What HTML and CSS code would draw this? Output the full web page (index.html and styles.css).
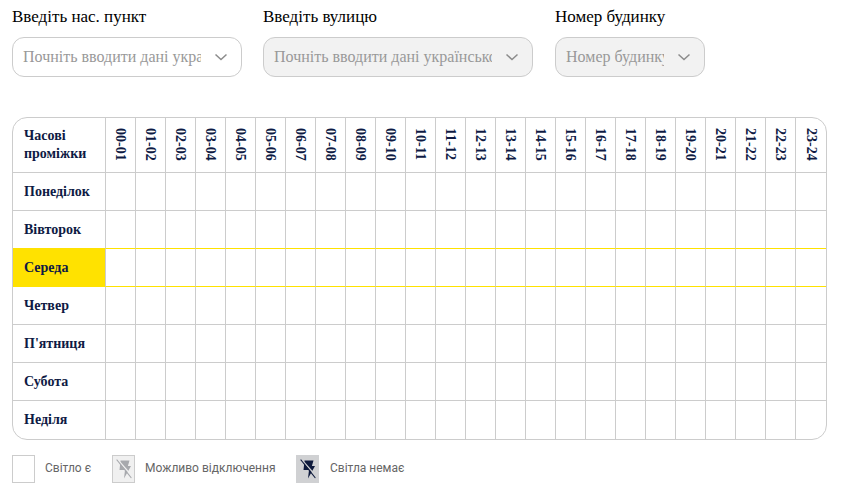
FILE: index.html
```html
<!DOCTYPE html>
<html lang="uk">
<head>
<meta charset="utf-8">
<title>Графік</title>
<link rel="stylesheet" href="styles.css">
</head>
<body>
<form class="filters">
  <div class="field field-city">
    <label class="field-label">Введіть нас. пункт</label>
    <div class="select">
      <input class="select-input" placeholder="Почніть вводити дані українською">
      <svg class="chevron" viewBox="0 0 14 8"><path d="M1.5 1.5 7 6.5 12.5 1.5"/></svg>
    </div>
  </div>
  <div class="field field-street">
    <label class="field-label">Введіть вулицю</label>
    <div class="select is-disabled">
      <input class="select-input" placeholder="Почніть вводити дані українською" disabled>
      <svg class="chevron" viewBox="0 0 14 8"><path d="M1.5 1.5 7 6.5 12.5 1.5"/></svg>
    </div>
  </div>
  <div class="field field-house">
    <label class="field-label">Номер будинку</label>
    <div class="select is-disabled">
      <input class="select-input" placeholder="Номер будинку" disabled>
      <svg class="chevron" viewBox="0 0 14 8"><path d="M1.5 1.5 7 6.5 12.5 1.5"/></svg>
    </div>
  </div>
</form>

<div class="schedule">
  <table class="grid">
    <thead>
      <tr>
        <th class="head-title">Часові<br>проміжки</th>
        <th><span class="hour">00-01</span></th><th><span class="hour">01-02</span></th><th><span class="hour">02-03</span></th><th><span class="hour">03-04</span></th><th><span class="hour">04-05</span></th><th><span class="hour">05-06</span></th><th><span class="hour">06-07</span></th><th><span class="hour">07-08</span></th><th><span class="hour">08-09</span></th><th><span class="hour">09-10</span></th><th><span class="hour">10-11</span></th><th><span class="hour">11-12</span></th><th><span class="hour">12-13</span></th><th><span class="hour">13-14</span></th><th><span class="hour">14-15</span></th><th><span class="hour">15-16</span></th><th><span class="hour">16-17</span></th><th><span class="hour">17-18</span></th><th><span class="hour">18-19</span></th><th><span class="hour">19-20</span></th><th><span class="hour">20-21</span></th><th><span class="hour">21-22</span></th><th><span class="hour">22-23</span></th><th><span class="hour">23-24</span></th>
      </tr>
    </thead>
    <tbody id="rows"></tbody>
  </table>
</div>

<div class="legend">
  <div class="legend-item">
    <span class="swatch"></span>
    <span class="legend-text">Світло є</span>
  </div>
  <div class="legend-item">
    <span class="swatch swatch-maybe">
      <svg class="bolt" viewBox="0 0 23 28"><path class="bolt-body" d="M8.5 5.5h9l-1.6 5.5H19l-7 12.5 1-8.5H7.5z"/><path class="bolt-gap" d="M5.5 6.5 19 22"/><path class="bolt-slash" d="M5 5 19 22.5"/></svg>
    </span>
    <span class="legend-text">Можливо відключення</span>
  </div>
  <div class="legend-item">
    <span class="swatch swatch-off">
      <svg class="bolt" viewBox="0 0 23 28"><path class="bolt-body" d="M8.5 5.5h9l-1.6 5.5H19l-7 12.5 1-8.5H7.5z"/><path class="bolt-gap" d="M5.5 6.5 19 22"/><path class="bolt-slash" d="M5 5 19 22.5"/></svg>
    </span>
    <span class="legend-text">Світла немає</span>
  </div>
</div>
<script src="app.js"></script>
</body>
</html>
```
FILE: app.js
```js
var days = ["Понеділок","Вівторок","Середа","Четвер","П'ятниця","Субота","Неділя"];
var html = "";
days.forEach(function (d, i) {
  html += '<tr class="' + (i === 2 ? "today" : "") + '"><th class="day">' + d + "</th>";
  for (var h = 0; h < 24; h++) html += "<td></td>";
  html += "</tr>";
});
document.getElementById("rows").innerHTML = html;
```
FILE: styles.css
```css
* { box-sizing: border-box; }
html, body { margin: 0; padding: 0; background: #fff; }
body { width: 844px; height: 490px; overflow: hidden; font-family: "Liberation Serif", serif; }

.filters { display: flex; padding: 8px 0 0 12px; height: 117px; }
.field-city { width: 230px; margin-right: 21px; }
.field-street { width: 270px; margin-right: 22px; }
.field-house { width: 150px; }
.field-label { display: block; font-size: 17px; line-height: 18px; height: 29px; color: #000; }

.select { display: flex; align-items: center; height: 40px; border: 1px solid #ccc; border-radius: 12px; background: #fff; padding-right: 13px; }
.select.is-disabled { background: #f2f2f2; }
.select-input { flex: 1; min-width: 0; height: 24px; margin: 0 13px 0 10px; padding: 0; border: 0; outline: 0; background: transparent; font: 16px "Liberation Serif", serif; color: #333; }
.select-input::placeholder { color: #999; opacity: 1; }
.chevron { width: 14px; height: 8px; flex: none; fill: none; stroke: #8c8c8c; stroke-width: 1.5; }

.schedule { width: 815px; margin-left: 12px; border: 1px solid #ccc; border-radius: 15px; overflow: hidden; }
.grid { border-collapse: separate; border-spacing: 0; table-layout: fixed; width: 813px; font-weight: bold; color: #0e1a44; }
.grid th, .grid td { padding: 0; border-right: 1px solid #ccc; border-bottom: 1px solid #ccc; font-size: 14px; width: 30px; }
.grid th:first-child { width: 93px; }
.grid tr > :last-child { border-right: 0; }
.grid tbody tr:last-child > * { border-bottom: 0; }
.grid thead tr { height: 55px; }
.grid tbody tr { height: 38px; }
.head-title { text-align: left; padding-left: 11px !important; line-height: 18px; }
.day { text-align: left; padding-left: 11px !important; }
.hour { display: inline-block; writing-mode: vertical-rl; line-height: 16px; vertical-align: middle; margin: -2px 1px 0 0; }
.grid tr:has(+ .today) > *, .today td { border-bottom-color: #ffe200; }
.today .day { background: #ffe200; border-bottom-color: #ffe200; }

.legend { display: flex; align-items: center; padding: 15px 0 0 12px; font-family: Roboto, sans-serif; font-size: 12px; line-height: 14px; color: #666; }
.legend-item { display: flex; align-items: center; }
.legend-item:nth-child(1) { width: 100px; }
.legend-item:nth-child(2) { width: 184px; }
.legend-text { margin-top: -2px; }
.swatch { display: flex; align-items: center; justify-content: center; width: 23px; height: 28px; border: 1px solid #ccc; margin-right: 10px; }
.swatch-maybe { background: #f0f0f0; }
.swatch-off { background: #d0d1d3; border-color: #d0d1d3; margin-right: 11px; }
.bolt { flex: none; width: 23px; height: 28px; }
.bolt-slash { fill: none; stroke-width: 1.2; stroke-linecap: round; }
.bolt-gap { fill: none; stroke-width: 1.2; }
.swatch-maybe .bolt-gap { stroke: #f0f0f0; transform: translate(1px, -1px); }
.swatch-off .bolt-gap { stroke: #d0d1d3; transform: translate(1px, -1px); }
.swatch-maybe .bolt-body { fill: #a7a9ad; }
.swatch-maybe .bolt-slash { stroke: #a7a9ad; }
.swatch-off .bolt-body { fill: #0e1a3c; }
.swatch-off .bolt-slash { stroke: #0e1a3c; }
```
